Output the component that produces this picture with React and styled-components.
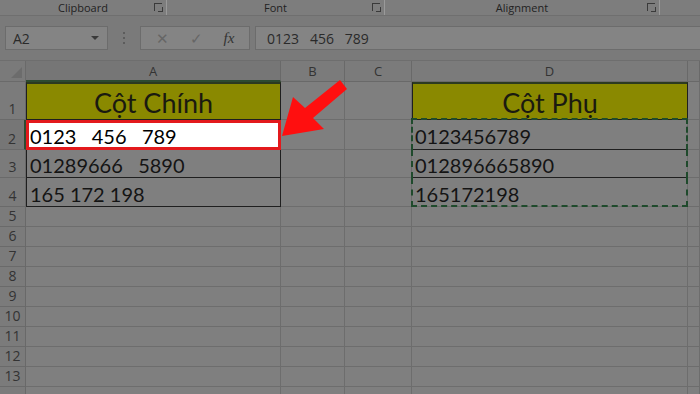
import React from 'react';
import styled, { createGlobalStyle } from 'styled-components';

const GlobalStyle = createGlobalStyle`
  html, body {
    margin: 0;
    padding: 0;
    background: #7b7b7b;
    overflow: hidden;
  }
`;

const Screen = styled.div`
  position: relative;
  width: 700px;
  height: 394px;
  overflow: hidden;
  background: #7b7b7b;
  font-family: "Open Sans", "Noto Sans", sans-serif;
`;

const GroupBar = styled.div`
  display: grid;
  grid-template-columns: 167px 218px 275px 1fr;
  height: 15px;
  border-bottom: 1px solid #6f6f6f;
  background: #7d7d7d;
`;

const Group = styled.div`
  position: relative;
  display: flex;
  align-items: center;
  justify-content: center;
  font-size: 11px;
  color: #222;
  border-right: ${p => (p.$last ? 'none' : '1px solid #9a9a9a')};
  line-height: 1;
`;

const Launcher = styled.span`
  position: absolute;
  right: 4px;
  top: 3px;
  width: 7px;
  height: 7px;
  border-left: 1px solid #3a3a3a;
  border-top: 1px solid #3a3a3a;
  &::after {
    content: '';
    position: absolute;
    right: -1px;
    bottom: -1px;
    width: 4px;
    height: 4px;
    border-right: 1px solid #3a3a3a;
    border-bottom: 1px solid #3a3a3a;
  }
`;

const FormulaRow = styled.div`
  display: flex;
  align-items: center;
  height: 44px;
  padding: 0 0 0 5px;
  background: #7a7a7a;
  border-bottom: 1px solid #6e6e6e;
`;

const Box = styled.div`
  display: flex;
  align-items: center;
  height: 24px;
  background: #848484;
  border: 1px solid #6c6c6c;
  box-sizing: border-box;
  color: #2a2a2a;
`;

const NameBox = styled(Box)`
  width: 103px;
  padding: 0 8px 0 7px;
  justify-content: space-between;
  font-size: 14px;
`;

const Caret = styled.span`
  width: 0;
  height: 0;
  border-left: 4px solid transparent;
  border-right: 4px solid transparent;
  border-top: 4px solid #3a3a3a;
`;

const Dots = styled.div`
  width: 32px;
  display: flex;
  flex-direction: column;
  align-items: center;
  gap: 3px;
  span {
    width: 2px;
    height: 2px;
    background: #5c5c5c;
  }
`;

const FxBox = styled(Box)`
  width: 110px;
  justify-content: space-around;
  padding: 0 4px;
  font-size: 15px;
  color: #666;
`;

const FxLabel = styled.span`
  font-family: "Liberation Serif", serif;
  font-style: italic;
  font-size: 15px;
  color: #333;
`;

const Input = styled(Box)`
  flex: 1;
  margin-left: 5px;
  border-right: none;
  padding-left: 11px;
  font-size: 14px;
  white-space: pre;
`;

const Sheet = styled.div`
  display: grid;
  grid-template-columns: 26px 255px 64px 67px 276px 1fr;
  grid-template-rows: 21px 38px 30px 28px 29px repeat(10, 20px);
  background: #7f7f7f;
`;

const Corner = styled.div`
  background: #7a7a7a;
  border-right: 1px solid #6a6a6a;
  border-bottom: 1px solid #6a6a6a;
  position: relative;
  &::after {
    content: '';
    position: absolute;
    right: 3px;
    bottom: 3px;
    border-left: 11px solid transparent;
    border-bottom: 11px solid #6c6c6c;
  }
`;

const ColHead = styled.div`
  display: flex;
  align-items: center;
  justify-content: center;
  background: ${p => (p.$active ? '#767676' : '#7b7b7b')};
  color: #333;
  font-size: 13px;
  border-right: 1px solid #696969;
  border-bottom: ${p => (p.$active ? '2px solid #2d4a30' : '1px solid #696969')};
  box-sizing: border-box;
`;

const RowHead = styled.div`
  display: flex;
  align-items: flex-end;
  justify-content: center;
  padding-bottom: 1px;
  box-sizing: border-box;
  background: ${p => (p.$active ? '#767676' : '#7b7b7b')};
  color: #333;
  font-size: 14px;
  border-right: ${p => (p.$active ? '2px solid #2d4a30' : '1px solid #696969')};
  border-bottom: 1px solid #6a6a6a;
`;

const Cell = styled.div`
  position: relative;
  display: flex;
  align-items: center;
  box-sizing: border-box;
  padding-left: 3px;
  font-family: "Lato", "Noto Sans", sans-serif;
  font-size: 20px;
  white-space: pre;
  color: #141414;
  background: #7f7f7f;
  border-right: 1px solid #6d6d6d;
  border-bottom: 1px solid #6d6d6d;
`;

const TitleCell = styled(Cell)`
  justify-content: center;
  padding: 2px 0 0 0;
  font-size: 27px;
  background: #8a8900;
  color: #1a1a10;
  border: 1px solid #1f1f1f;
  border-top: 2px solid #2c3a20;
`;

const DataCell = styled(Cell)`
  border-left: ${p => (p.$boxed ? '1px solid #1f1f1f' : 'none')};
  border-right: 1px solid ${p => (p.$boxed ? '#1f1f1f' : '#6d6d6d')};
  border-bottom: 1px solid ${p => (p.$line ? '#1f1f1f' : '#6d6d6d')};
  padding-top: 3px;
  ${p => p.$ants && `
    &::after {
      content: '';
      position: absolute;
      left: -1px;
      right: -1px;
      top: ${p.$first ? '-2px' : '0'};
      bottom: -1px;
      border-left: 2px dashed #1f4a2c;
      border-right: 2px dashed #1f4a2c;
      ${p.$first ? 'border-top: 2px dashed #1f4a2c;' : ''}
      ${p.$end ? 'border-bottom: 2px dashed #1f4a2c;' : ''}
      pointer-events: none;
    }
  `}
`;

const Picked = styled(Cell)`
  background: #ffffff;
  color: #000;
  border: 3px solid #e3191c;
  padding-left: 1px;
  padding-top: 2px;
`;

const Arrow = styled.svg`
  position: absolute;
  left: 270px;
  top: 60px;
  pointer-events: none;
`;

const letters = ['A', 'B', 'C', 'D', ''];

const rows = [
  { a: '0123   456   789', d: '0123456789' },
  { a: '01289666   5890', d: '012896665890' },
  { a: '165 172 198', d: '165172198' },
];

export default function App() {
  const empties = Array.from({ length: 10 }, (_, i) => i + 5);

  return (
    <Screen>
      <GlobalStyle />
      <GroupBar>
        <Group>Clipboard<Launcher /></Group>
        <Group>Font<Launcher /></Group>
        <Group>Alignment<Launcher /></Group>
        <Group $last />
      </GroupBar>
      <FormulaRow>
        <NameBox>A2<Caret /></NameBox>
        <Dots><span /><span /><span /></Dots>
        <FxBox>
          <span>✕</span>
          <span>✓</span>
          <FxLabel>fx</FxLabel>
        </FxBox>
        <Input>0123   456   789</Input>
      </FormulaRow>

      <Sheet>
        <Corner />
        {letters.map((l, i) => (
          <ColHead key={i} $active={l === 'A'}>{l}</ColHead>
        ))}

        <RowHead>1</RowHead>
        <TitleCell>Cột Chính</TitleCell>
        <Cell />
        <Cell />
        <TitleCell>Cột Phụ</TitleCell>
        <Cell />

        {rows.map((r, i) => (
          <React.Fragment key={i}>
            <RowHead $active={i === 0}>{i + 2}</RowHead>
            {i === 0 ? (
              <Picked>{r.a}</Picked>
            ) : (
              <DataCell $boxed $line>{r.a}</DataCell>
            )}
            <Cell />
            <Cell />
            <DataCell $ants $line={i < 2} $first={i === 0} $end={i === 2}>
              {r.d}
            </DataCell>
            <Cell />
          </React.Fragment>
        ))}

        {empties.map(n => (
          <React.Fragment key={n}>
            <RowHead>{n < 14 ? n : ''}</RowHead>
            <Cell />
            <Cell />
            <Cell />
            <Cell />
            <Cell />
          </React.Fragment>
        ))}
      </Sheet>

      <Arrow width="90" height="80" viewBox="270 60 90 80">
        <polygon
          points="282,136 293,97 305,108 340,80 347,89 313,118 324,129"
          fill="#ff0f0f"
        />
      </Arrow>
    </Screen>
  );
}
